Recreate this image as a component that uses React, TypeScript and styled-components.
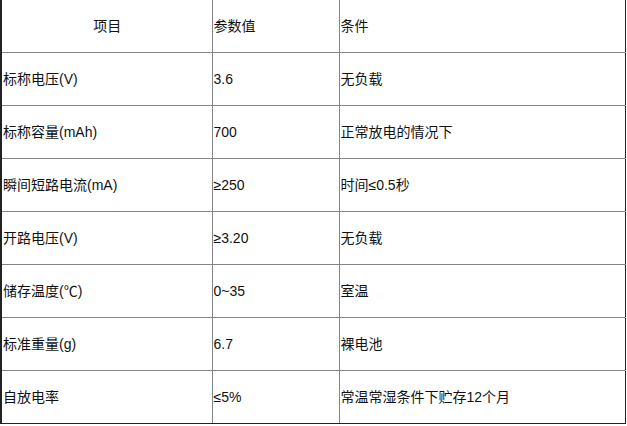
import styled, {createGlobalStyle} from 'styled-components';

const GlobalStyle = createGlobalStyle`
  html, body {
    margin: 0;
    padding: 0;
    background: #fff;
  }
  body {
    font-family: 'Liberation Sans', 'Noto Sans CJK SC', sans-serif;
    font-size: 14px;
    color: #111;
  }
`;

const SpecTable = styled.table`
  border-collapse: collapse;
  table-layout: fixed;
  width: 626px;
  border-left: 2px solid #222;
  border-right: 1px solid #222;
  border-bottom: 1px solid #222;
`;

const Row = styled.tr<{head?: boolean}>`
  height: ${({head}) => (head ? '52px' : '53px')};
`;

const Cell = styled.td<{center?: boolean}>`
  padding: 0 0 0 1px;
  vertical-align: middle;
  text-align: ${({center}) => (center ? 'center' : 'left')};
  border: 1px solid #858585;
  white-space: nowrap;
  line-height: 18px;

  tr:first-child > & {
    border-top: none;
  }
  tr:last-child > & {
    border-bottom: 1px solid #222;
  }
  &:first-child {
    border-left: 2px solid #222;
  }
  &:last-child {
    border-right: 1px solid #222;
  }
`;

const rows = [
  ['标称电压(V)', '3.6', '无负载'],
  ['标称容量(mAh)', '700', '正常放电的情况下'],
  ['瞬间短路电流(mA)', '≥250', '时间≤0.5秒'],
  ['开路电压(V)', '≥3.20', '无负载'],
  ['储存温度(℃)', '0~35', '室温'],
  ['标准重量(g)', '6.7', '裸电池'],
  ['自放电率', '≤5%', '常温常湿条件下贮存12个月'],
];

export default function App() {
  return (
    <>
      <GlobalStyle />
      <SpecTable>
        <colgroup>
          <col style={{width: 211}} />
          <col style={{width: 127}} />
          <col />
        </colgroup>
        <tbody>
          <Row head>
            <Cell center>项目</Cell>
            <Cell>参数值</Cell>
            <Cell>条件</Cell>
          </Row>
          {rows.map(([name, value, cond]) => (
            <Row key={name}>
              <Cell>{name}</Cell>
              <Cell>{value}</Cell>
              <Cell>{cond}</Cell>
            </Row>
          ))}
        </tbody>
      </SpecTable>
    </>
  );
}
